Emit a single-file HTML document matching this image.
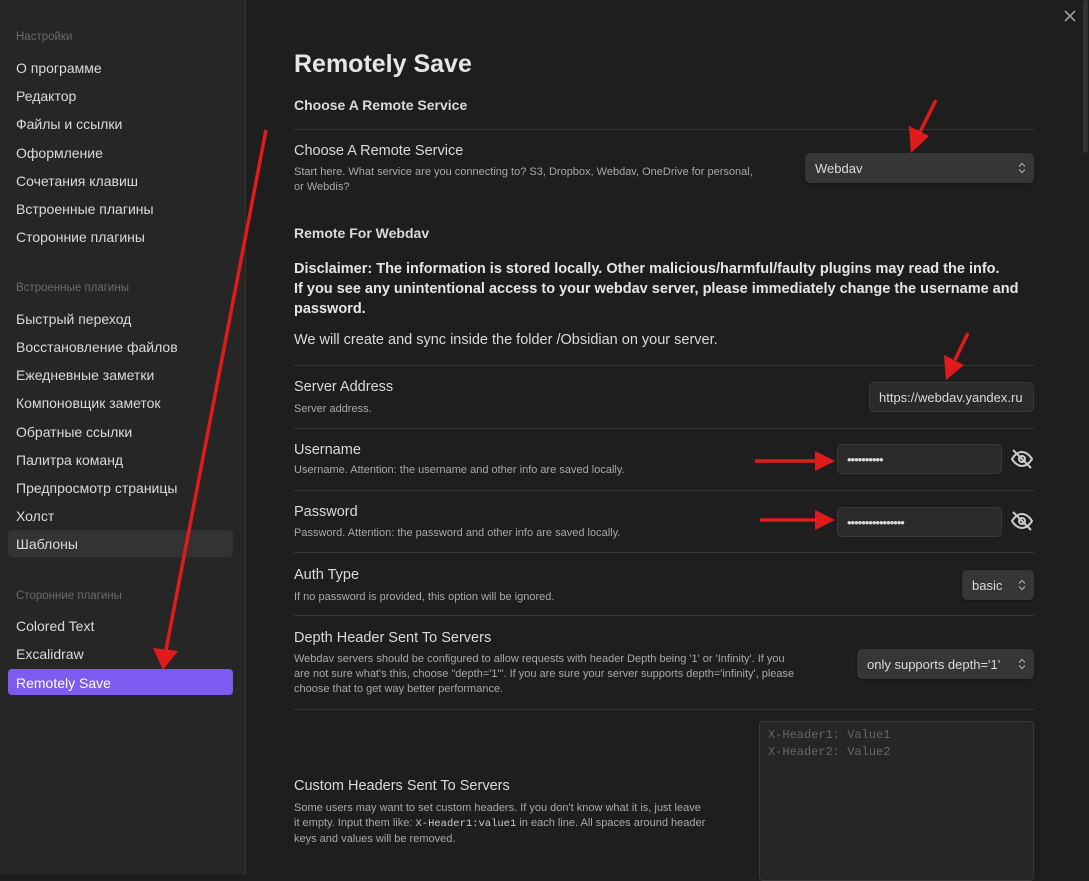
<!DOCTYPE html>
<html><head><meta charset="utf-8"><style>
*{margin:0;padding:0;box-sizing:border-box}
body{width:1089px;height:875px;background:#1e1e1e;font-family:"Liberation Sans",sans-serif;color:#dadada;position:relative;overflow:hidden}
.side{position:absolute;left:0;top:0;width:246px;height:875px;background:#262626;border-right:1px solid #333}
.a{position:absolute;white-space:nowrap}
.si{left:16px;font-size:14px;color:#dadada}
.sh{left:16px;font-size:11.5px;color:#6a6a6a}
.t{left:294px;font-size:14.5px;color:#dadada}
.d{left:294px;font-size:11px;color:#a8a8a8;line-height:15px}
.hr{position:absolute;left:294px;width:740px;height:1px;background:#363636}
.inp{position:absolute;background:#2a2a2a;border:1px solid #3a3a3a;border-radius:5px;font-size:13px;color:#dadada;padding-left:9px;display:flex;align-items:center}
.sel{position:absolute;background:#363636;border-radius:5px;font-size:13px;color:#dadada;padding-left:10px;display:flex;align-items:center;box-shadow:0 1px 2px #0006}
.sel svg{position:absolute;right:8px;top:50%;margin-top:-6px}
</style></head><body>
<div class="side">
<div class="a sh" style="top:31px">Настройки</div>
<div class="a si" style="top:60px">О программе</div>
<div class="a si" style="top:88px">Редактор</div>
<div class="a si" style="top:116px">Файлы и ссылки</div>
<div class="a si" style="top:145px">Оформление</div>
<div class="a si" style="top:173px">Сочетания клавиш</div>
<div class="a si" style="top:201px">Встроенные плагины</div>
<div class="a si" style="top:229px">Сторонние плагины</div>
<div class="a sh" style="top:282px">Встроенные плагины</div>
<div class="a si" style="top:311px">Быстрый переход</div>
<div class="a si" style="top:339px">Восстановление файлов</div>
<div class="a si" style="top:367px">Ежедневные заметки</div>
<div class="a si" style="top:395px">Компоновщик заметок</div>
<div class="a si" style="top:424px">Обратные ссылки</div>
<div class="a si" style="top:452px">Палитра команд</div>
<div class="a si" style="top:480px">Предпросмотр страницы</div>
<div class="a si" style="top:508px">Холст</div>
<div style="position:absolute;left:8px;top:530px;width:225px;height:27px;background:#333;border-radius:4px"></div>
<div class="a si" style="top:536px">Шаблоны</div>
<div class="a sh" style="top:590px">Сторонние плагины</div>
<div class="a si" style="top:618px">Colored Text</div>
<div class="a si" style="top:646px">Excalidraw</div>
<div style="position:absolute;left:8px;top:669px;width:225px;height:26px;background:#7c5cf0;border-radius:4px"></div>
<div class="a si" style="top:675px;color:#fff">Remotely Save</div>
</div>
<svg style="position:absolute;left:1064px;top:10px" width="12" height="12" viewBox="0 0 12 12" stroke="#aaa" stroke-width="1.5"><path d="M1 1l10 10M11 1L1 11"/></svg>
<div style="position:absolute;left:1083px;top:0;width:5px;height:153px;background:#333;border-radius:3px"></div>

<div class="a" style="left:294px;top:50px;font-size:25px;font-weight:bold;color:#e6e6e6">Remotely Save</div>
<div class="a t" style="top:97px;font-weight:bold;font-size:14px">Choose A Remote Service</div>
<div class="hr" style="top:129px"></div>
<div class="a t" style="top:143px">Choose A Remote Service</div>
<div class="a d" style="top:165px">Start here. What service are you connecting to? S3, Dropbox, Webdav, OneDrive for personal,<br>or Webdis?</div>
<div class="sel" style="left:805px;top:153px;width:229px;height:30px">Webdav<svg width="8" height="12" viewBox="0 0 8 12" fill="none" stroke="#aaa" stroke-width="1.2"><path d="M1 4.5L4 1.5 7 4.5M1 7.5L4 10.5 7 7.5"/></svg></div>
<div class="a t" style="top:225px;font-weight:bold;font-size:14px">Remote For Webdav</div>
<div class="a" style="left:294px;top:259px;font-size:14.5px;font-weight:bold;color:#e6e6e6;line-height:20px">Disclaimer: The information is stored locally. Other malicious/harmful/faulty plugins may read the info.<br>If you see any unintentional access to your webdav server, please immediately change the username and<br>password.</div>
<div class="a" style="left:294px;top:332px;font-size:14.5px;color:#dadada">We will create and sync inside the folder /Obsidian on your server.</div>
<div class="hr" style="top:365px"></div>
<div class="a t" style="top:379px">Server Address</div>
<div class="a d" style="top:402px">Server address.</div>
<div class="inp" style="left:869px;top:382px;width:165px;height:30px">https://webdav.yandex.ru</div>
<div class="hr" style="top:428px"></div>
<div class="a t" style="top:442px">Username</div>
<div class="a d" style="top:463px">Username. Attention: the username and other info are saved locally.</div>
<div class="inp" style="left:837px;top:444px;width:165px;height:30px;letter-spacing:-1px">••••••••••</div>
<div class="hr" style="top:490px"></div>
<div class="a t" style="top:504px">Password</div>
<div class="a d" style="top:526px">Password. Attention: the password and other info are saved locally.</div>
<div class="inp" style="left:837px;top:507px;width:165px;height:30px;letter-spacing:-1px">••••••••••••••••</div>
<svg style="position:absolute;left:1010px;top:447px" width="24" height="24" viewBox="0 0 24 24" fill="none" stroke="#ccc" stroke-width="2"><path d="M2 12s4-7 10-7 10 7 10 7-4 7-10 7S2 12 2 12z"/><circle cx="12" cy="12" r="3"/><path d="M3 3l18 18"/></svg>
<svg style="position:absolute;left:1010px;top:509px" width="24" height="24" viewBox="0 0 24 24" fill="none" stroke="#ccc" stroke-width="2"><path d="M2 12s4-7 10-7 10 7 10 7-4 7-10 7S2 12 2 12z"/><circle cx="12" cy="12" r="3"/><path d="M3 3l18 18"/></svg>
<div class="hr" style="top:552px"></div>
<div class="a t" style="top:567px">Auth Type</div>
<div class="a d" style="top:590px">If no password is provided, this option will be ignored.</div>
<div class="sel" style="left:962px;top:570px;width:72px;height:30px">basic<svg width="8" height="12" viewBox="0 0 8 12" fill="none" stroke="#aaa" stroke-width="1.2"><path d="M1 4.5L4 1.5 7 4.5M1 7.5L4 10.5 7 7.5"/></svg></div>
<div class="hr" style="top:615px"></div>
<div class="a t" style="top:630px">Depth Header Sent To Servers</div>
<div class="a d" style="top:652px">Webdav servers should be configured to allow requests with header Depth being '1' or 'Infinity'. If you<br>are not sure what's this, choose "depth='1'". If you are sure your server supports depth='infinity', please<br>choose that to get way better performance.</div>
<div class="sel" style="left:857px;top:649px;width:177px;height:30px">only supports depth='1'<svg width="8" height="12" viewBox="0 0 8 12" fill="none" stroke="#aaa" stroke-width="1.2"><path d="M1 4.5L4 1.5 7 4.5M1 7.5L4 10.5 7 7.5"/></svg></div>
<div class="hr" style="top:709px"></div>
<div style="position:absolute;left:759px;top:721px;width:275px;height:160px;background:#262626;border:1px solid #3a3a3a;border-radius:4px;padding:5px 8px;font-family:'Liberation Mono',monospace;font-size:12px;color:#666;line-height:17px">X-Header1: Value1<br>X-Header2: Value2</div>
<div class="a t" style="top:778px">Custom Headers Sent To Servers</div>
<div class="a d" style="top:801px">Some users may want to set custom headers. If you don't know what it is, just leave<br>it empty. Input them like: <span style="font-family:'Liberation Mono',monospace;color:#ccc;font-size:10.5px">X-Header1:value1</span> in each line. All spaces around header<br>keys and values will be removed.</div>

<svg style="position:absolute;left:0;top:0" width="1089" height="875">
<g stroke="#e01b1b" stroke-width="3.5" fill="#e01b1b">
<line x1="266" y1="130" x2="166" y2="650"/><polygon points="153,648 178,651 163,670" stroke="none"/>
<line x1="936" y1="100" x2="920" y2="132"/><polygon points="909,126 929,136 911,153" stroke="none"/>
<line x1="968" y1="333" x2="955" y2="360"/><polygon points="944,355 964,365 946,380" stroke="none"/>
<line x1="755" y1="461" x2="815" y2="461"/><polygon points="815,451 835,461 815,471" stroke="none"/>
<line x1="760" y1="520" x2="815" y2="520"/><polygon points="815,510 835,520 815,530" stroke="none"/>
</g></svg>
</body></html>
